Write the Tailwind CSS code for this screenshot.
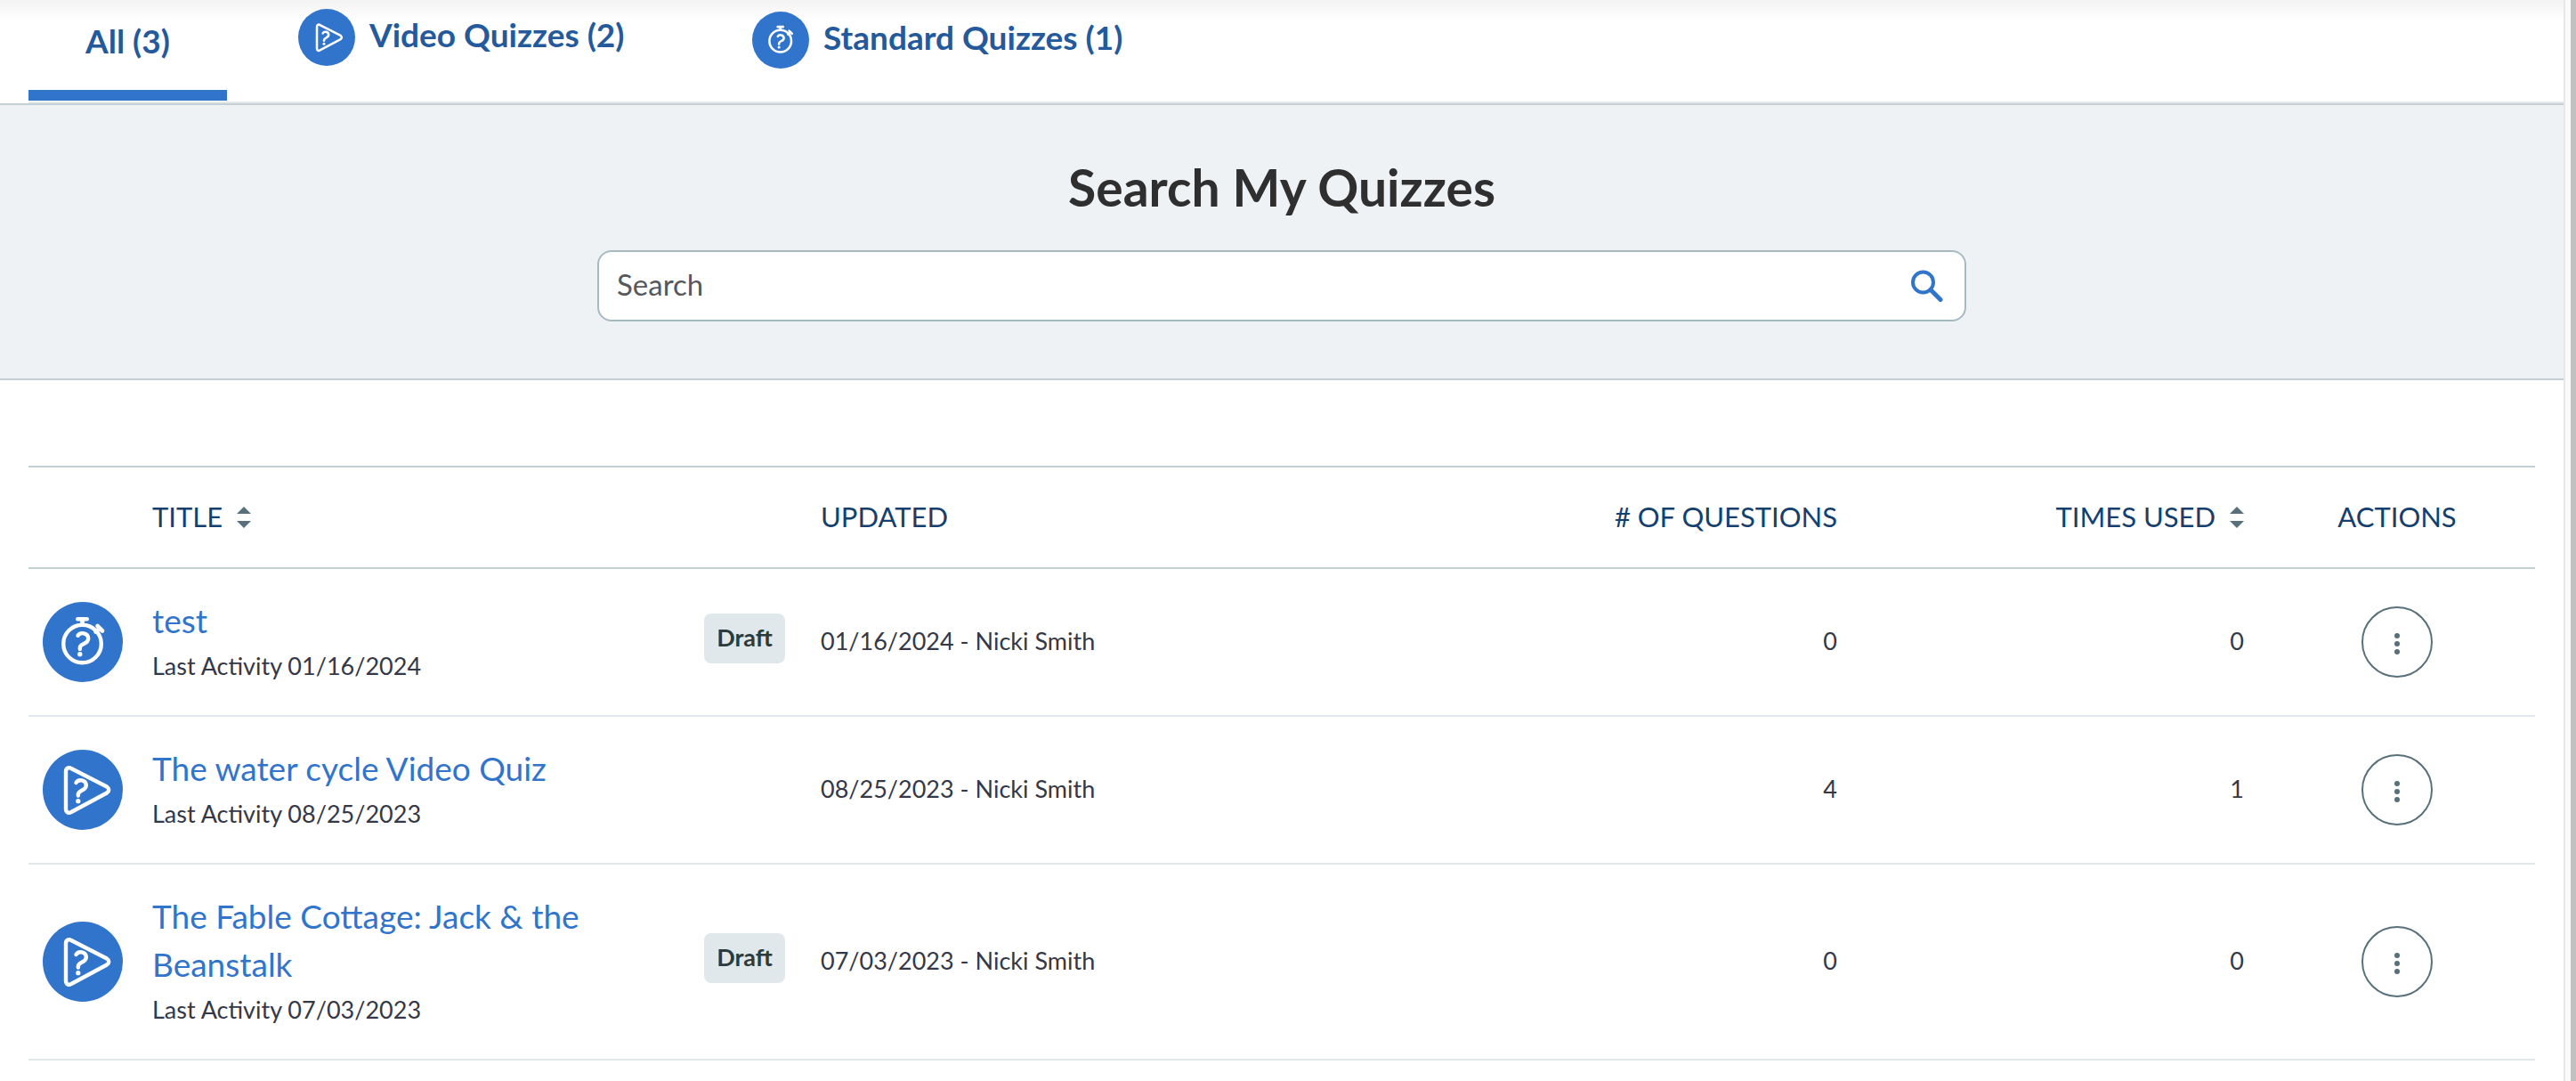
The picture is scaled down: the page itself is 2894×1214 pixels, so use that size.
<!DOCTYPE html>
<html lang="en">
<head>
    <meta charset="UTF-8">
    <meta name="viewport" content="width=device-width, initial-scale=1.0">
    <title>My Quizzes</title>
    <script src="https://cdn.jsdelivr.net/npm/@tailwindcss/browser@4"></script>
</head>
<body class="bg-white font-['Lato','Liberation_Sans',sans-serif] text-[27px] leading-[48px] text-[#353846]">
    <!-- Shared icons -->
    <svg class="hidden" xmlns="http://www.w3.org/2000/svg">
        <symbol id="icon-video" viewBox="0 0 90 90" fill="none" stroke="#fff" stroke-linecap="round" stroke-linejoin="round">
            <path stroke-width="4.4" d="M26 24.5V66.5C26 70 29 72 32 70L72 48.5C75 46.5 75 43.5 72 41.5L32 21C29 19 26 21 26 24.5Z"/>
            <path stroke-width="4.4" d="M37.5 37C40 32.5 48.500 33.5 48.8 39.8C49 46.5 40 44.5 39.8 50.5V51.5"/>
            <circle cx="39.8" cy="57.7" r="2.6" fill="#fff" stroke="none"/>
        </symbol>
        <symbol id="icon-standard" viewBox="0 0 90 90" fill="none" stroke="#fff" stroke-linecap="round" stroke-linejoin="round">
            <circle cx="44.5" cy="47" r="21.3" stroke-width="4.4"/>
            <path stroke-width="4.6" d="M39.3 19.3H49.7M44.5 20V25"/>
            <path stroke-width="4.6" d="M61.5 27L67 32.5M59.5 33.5L64 30"/>
            <path stroke-width="4.4" d="M39.5 37.8C42 33.5 51 34.5 51.2 41C51.2 48 42 46 41.8 51.5V53"/>
            <circle cx="41.8" cy="58.8" r="2.7" fill="#fff" stroke="none"/>
        </symbol>
        <symbol id="icon-sort" viewBox="0 0 16 24">
            <path fill="#577079" d="M8 0L16 8H0ZM8 24L0 16H16Z"/>
        </symbol>
        <symbol id="icon-dots" viewBox="0 0 6 24">
            <g fill="#577079"><circle cx="3" cy="3" r="3"/><circle cx="3" cy="12" r="3"/><circle cx="3" cy="21" r="3"/></g>
        </symbol>
    </svg>

    <div class="flex min-h-screen">
        <main class="flex-1">
            <!-- Tabs -->
            <nav class="pl-8 bg-linear-to-b from-[#f3f3f3] to-white to-[24px]">
                <div class="flex items-start border-b-2 border-[#e5e8e9] h-[116px] text-[37px] leading-[44px] font-bold text-[#245a9b]">
                    <a href="#" class="w-[223px] h-[113px] pt-6 text-center border-b-12 border-[#3174cc]">All (3)</a>
                    <a href="#" class="ml-20 pt-[10px] flex gap-4">
                        <span class="size-16 rounded-full bg-[#3174cc] flex items-center justify-center"><svg class="size-[52px]"><use href="#icon-video"/></svg></span>
                        <span class="pt-[7px] w-[286px] whitespace-nowrap">Video Quizzes (2)</span>
                    </a>
                    <a href="#" class="ml-36 pt-[13px] flex gap-4">
                        <span class="size-16 rounded-full bg-[#3174cc] flex items-center justify-center"><svg class="size-[52px]"><use href="#icon-standard"/></svg></span>
                        <span class="pt-[7px] whitespace-nowrap">Standard Quizzes (1)</span>
                    </a>
                </div>
            </nav>

            <!-- Search -->
            <section class="bg-[#eef2f5] border-y-2 border-[#c5d0d6] pt-14 pb-16">
                <h1 class="text-center text-[57px] leading-[72px] font-bold text-[#2f2f2f]">Search My Quizzes</h1>
                <form class="mt-[35px] mx-auto w-[1538px] max-w-full h-20 flex items-center bg-white border-2 border-[#a6bac2] rounded-2xl pl-5 pr-6">
                    <input type="text" aria-label="Search" placeholder="Search" class="flex-1 h-full pb-1 text-[33px] leading-[40px] text-[#58585a] placeholder:text-[#58585a] outline-none">
                    <button type="submit" aria-label="Submit search">
                        <svg class="size-9" viewBox="0 0 36 36" fill="none" stroke="#3174cc"><circle cx="13.5" cy="14" r="11.5" stroke-width="4"/><path stroke-width="5" stroke-linecap="round" d="M22 22.5L33 33.5"/></svg>
                    </button>
                </form>
            </section>

            <!-- Quiz list -->
            <div class="px-8 pt-24">
                <table class="w-full table-fixed border-t-2 border-[#c5d0d6]">
                    <colgroup>
                        <col class="w-[139px]">
                        <col class="w-[620px]">
                        <col class="w-[131px]">
                        <col>
                        <col class="w-[400px]">
                        <col class="w-[474px]">
                        <col class="w-[310px]">
                    </colgroup>
                    <thead>
                        <tr class="h-[114px] border-b-2 border-[#c5d0d6] text-[31px] text-[#153f6e]">
                            <th></th>
                            <th class="pb-[3px] font-normal text-left"><button class="flex items-center gap-4">TITLE <svg class="mt-[3px] w-4 h-6"><use href="#icon-sort"/></svg></button></th>
                            <th></th>
                            <th class="pb-[3px] font-normal text-left">UPDATED</th>
                            <th class="pb-[3px] font-normal text-right"># OF QUESTIONS</th>
                            <th class="pb-[3px] font-normal pr-[17px]"><button class="ml-auto flex items-center gap-4">TIMES USED <svg class="mt-[3px] w-4 h-6"><use href="#icon-sort"/></svg></button></th>
                            <th class="pb-[3px] font-normal text-center">ACTIONS</th>
                        </tr>
                    </thead>
                    <tbody>
                        <tr class="border-b-2 border-[#e0e6ea]">
                            <td class="pl-4"><span class="size-[90px] rounded-full bg-[#3174cc] block"><svg class="size-full"><use href="#icon-standard"/></svg></span></td>
                            <td class="pt-[31px] pb-[31px]"><a href="#" class="block text-[37px] leading-[54px] text-[#3174cc]">test</a>Last Activity 01/16/2024</td>
                            <td><span class="mb-2 pb-[3px] h-14 w-[91px] flex items-center justify-center rounded-lg bg-[#e0e8eb] font-bold text-[#2c3b3c]">Draft</span></td>
                            <td class="pb-[3px]">01/16/2024 - Nicki Smith</td>
                            <td class="pb-[3px] text-right">0</td>
                            <td class="pb-[3px] text-right pr-[17px]">0</td>
                            <td><button aria-label="Actions" class="mx-auto size-20 rounded-full border-2 border-[#577079] flex items-center justify-center"><svg class="mt-1 w-[6px] h-6"><use href="#icon-dots"/></svg></button></td>
                        </tr>
                        <tr class="border-b-2 border-[#e0e6ea]">
                            <td class="pl-4"><span class="size-[90px] rounded-full bg-[#3174cc] block"><svg class="size-full"><use href="#icon-video"/></svg></span></td>
                            <td class="pt-[31px] pb-[31px]"><a href="#" class="block text-[37px] leading-[54px] text-[#3174cc]">The water cycle Video Quiz</a>Last Activity 08/25/2023</td>
                            <td></td>
                            <td class="pb-[3px]">08/25/2023 - Nicki Smith</td>
                            <td class="pb-[3px] text-right">4</td>
                            <td class="pb-[3px] text-right pr-[17px]">1</td>
                            <td><button aria-label="Actions" class="mx-auto size-20 rounded-full border-2 border-[#577079] flex items-center justify-center"><svg class="mt-1 w-[6px] h-6"><use href="#icon-dots"/></svg></button></td>
                        </tr>
                        <tr class="border-b-2 border-[#e0e6ea]">
                            <td class="pl-4"><span class="size-[90px] rounded-full bg-[#3174cc] block"><svg class="size-full"><use href="#icon-video"/></svg></span></td>
                            <td class="pt-[31px] pb-[31px] pr-20"><a href="#" class="block text-[37px] leading-[54px] text-[#3174cc]">The Fable Cottage: Jack &amp; the Beanstalk</a>Last Activity 07/03/2023</td>
                            <td><span class="mb-2 pb-[3px] h-14 w-[91px] flex items-center justify-center rounded-lg bg-[#e0e8eb] font-bold text-[#2c3b3c]">Draft</span></td>
                            <td class="pb-[3px]">07/03/2023 - Nicki Smith</td>
                            <td class="pb-[3px] text-right">0</td>
                            <td class="pb-[3px] text-right pr-[17px]">0</td>
                            <td><button aria-label="Actions" class="mx-auto size-20 rounded-full border-2 border-[#577079] flex items-center justify-center"><svg class="mt-1 w-[6px] h-6"><use href="#icon-dots"/></svg></button></td>
                        </tr>
                    </tbody>
                </table>
            </div>
        </main>

        <!-- Scroll track -->
        <div class="w-[14px] bg-[#fafafa] border-l-2 border-l-[#e8e8e8] border-r-6 border-r-[#c1c1c1]"></div>
    </div>
</body>
</html>
